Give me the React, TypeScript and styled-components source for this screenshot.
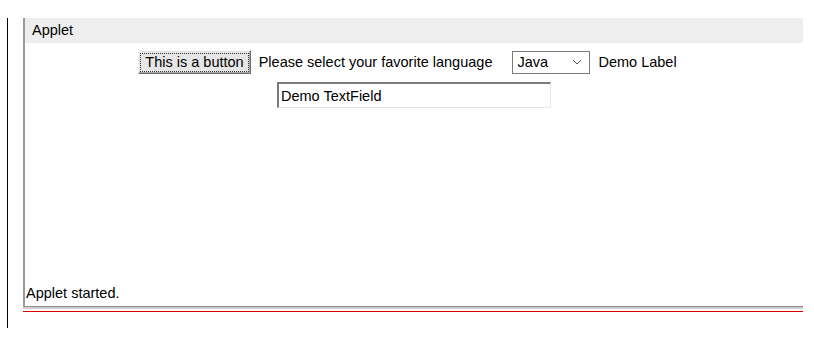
import React from 'react'
import styled, { createGlobalStyle } from 'styled-components'

const GlobalStyle = createGlobalStyle`
  html, body {
    margin: 0;
    padding: 0;
    background: #ffffff;
  }
  body {
    font-family: "Liberation Sans", Arial, sans-serif;
    font-size: 14.5px;
    color: #000000;
  }
`

const Page = styled.div`
  display: flex;
  align-items: flex-start;
  padding-top: 18px;
  width: 814px;
  height: 346px;
  box-sizing: border-box;
`

const LeftRule = styled.div`
  width: 1px;
  height: 310px;
  margin-left: 7px;
  background: #000000;
`

const Column = styled.div`
  display: flex;
  flex-direction: column;
  margin-left: 15px;
  width: 780px;
`

const AppletFrame = styled.div`
  display: flex;
  flex-direction: column;
  height: 289px;
  box-sizing: border-box;
  border-left: 2px solid #9a9a9a;
  border-bottom: 1px solid #8c8c8c;
  box-shadow: 0 2px 0 #cfcfcf;
`

const TitleBar = styled.div`
  height: 25px;
  line-height: 25px;
  background: #eeeeee;
  padding-left: 7px;
`

const Content = styled.div`
  flex: 1;
  display: flex;
  flex-direction: column;
  align-items: center;
  padding-top: 7px;
  gap: 8px;
`

const FlowRow = styled.div<{ $gap?: number; $shift?: number }>`
  display: flex;
  align-items: center;
  justify-content: center;
  gap: ${({ $gap }) => $gap ?? 8}px;
  margin-left: ${({ $shift }) => $shift ?? 0}px;
`

const Button = styled.button`
  font: inherit;
  color: #000;
  height: 24px;
  padding: 1px;
  background: #e6e6e6;
  border: 1px solid;
  border-color: #f6f6f6 #6e6e6e #6e6e6e #f6f6f6;
  box-shadow: inset -1px -1px 0 #a8a8a8;
  display: flex;
  align-items: center;
`

const FocusRing = styled.span`
  border: 1px dotted #333333;
  padding: 0 4px;
  line-height: 17px;
`

const Label = styled.span<{ $after?: number }>`
  line-height: 20px;
  margin-right: ${({ $after }) => $after ?? 0}px;
`

const Choice = styled.div`
  width: 78px;
  height: 23px;
  box-sizing: border-box;
  border: 1px solid #7a7a7a;
  background: #ffffff;
  display: flex;
  align-items: center;
  justify-content: space-between;
  padding: 0 7px 0 4px;
`

const TextField = styled.div`
  width: 274px;
  height: 26px;
  box-sizing: border-box;
  border-style: solid;
  border-width: 2px 1px 1px 2px;
  border-color: #7a7a7a #e6e6e6 #e6e6e6 #7a7a7a;
  background: #ffffff;
  display: flex;
  align-items: center;
  padding-left: 2px;
`

const StatusBar = styled.div`
  height: 20px;
  line-height: 20px;
  padding-left: 1px;
  margin-bottom: 3px;
`

const RedRule = styled.div`
  height: 1px;
  margin-top: 4px;
  background: #e00000;
`

const Chevron = () => (
  <svg width="10" height="6" viewBox="0 0 10 6">
    <polyline points="1,1 5,5 9,1" fill="none" stroke="#555" strokeWidth="1" />
  </svg>
)

const App: React.FC = () => {
  return (
    <>
      <GlobalStyle />
      <Page>
        <LeftRule />
        <Column>
          <AppletFrame>
            <TitleBar>Applet</TitleBar>
            <Content>
              <FlowRow $gap={8} $shift={-13}>
                <Button>
                  <FocusRing>This is a button</FocusRing>
                </Button>
                <Label $after={12}>Please select your favorite language</Label>
                <Choice>
                  <span>Java</span>
                  <Chevron />
                </Choice>
                <Label>Demo Label</Label>
              </FlowRow>
              <FlowRow>
                <TextField>Demo TextField</TextField>
              </FlowRow>
            </Content>
            <StatusBar>Applet started.</StatusBar>
          </AppletFrame>
          <RedRule />
        </Column>
      </Page>
    </>
  )
}

export default App
